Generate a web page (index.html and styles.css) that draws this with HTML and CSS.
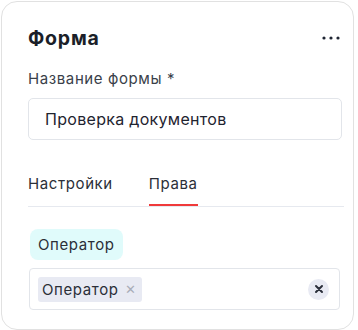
FILE: index.html
```html
<!DOCTYPE html>
<html lang="ru">
  <head>
    <meta charset="UTF-8" />
    <meta name="viewport" content="width=device-width, initial-scale=1.0" />
    <title>Форма</title>
    <link rel="stylesheet" href="styles.css">
  </head>
  <body>
    <div class="card">
      <div class="card-header">
        <h2>Форма</h2>
        <button class="more" aria-label="Ещё">
          <svg width="18" height="4" viewBox="0 0 18 4">
            <circle cx="2" cy="2" r="1.6" fill="#1f2533" />
            <circle cx="9" cy="2" r="1.6" fill="#1f2533" />
            <circle cx="16" cy="2" r="1.6" fill="#1f2533" />
          </svg>
        </button>
      </div>

      <label class="field-label">Название формы *</label>
      <div class="input">Проверка документов</div>

      <div class="tabs">
        <div class="tab">Настройки</div>
        <div class="tab active">Права</div>
      </div>

      <div class="role">Оператор</div>

      <div class="select">
        <div class="chip">
          Оператор
          <span class="chip-x">✕</span>
        </div>
        <button class="clear" aria-label="Очистить">
          <svg width="10" height="10" viewBox="0 0 10 10">
            <path d="M2 2 L8 8 M8 2 L2 8" stroke="#2a2f3a" stroke-width="2" stroke-linecap="round" />
          </svg>
        </button>
      </div>
    </div>
  </body>
</html>
```

FILE: styles.css
```css
body {
  margin: 0;
  padding: 1px 4px 2px 1px;
  font-family: Inter, "Noto Sans", sans-serif;
  color: #2b2f38;
  background: #fff;
  letter-spacing: 0.6px;
}
.card {
  border: 1.5px solid #e1e1e1;
  border-radius: 16px;
  padding: 19px 13px 16px 26px;
  height: 292px;
}
.card-header {
  display: flex;
  align-items: center;
  justify-content: space-between;
  height: 34px;
}
h2 {
  margin: 0;
  font-size: 19.5px;
  font-weight: 700;
  color: #1b1f29;
  letter-spacing: 0.8px;
}
.more {
  border: none;
  background: none;
  padding: 0;
  display: flex;
}
.field-label {
  display: block;
  margin-top: 14px;
  font-size: 15px;
  color: #3a3f4a;
}
.input {
  margin-top: 10px;
  width: 314px;
  height: 42px;
  box-sizing: border-box;
  border: 1px solid #e2e5ea;
  border-radius: 5px;
  padding: 0 16px;
  display: flex;
  align-items: center;
  font-size: 16px;
  letter-spacing: 0.3px;
  color: #1f2430;
}
.tabs {
  display: flex;
  gap: 36px;
  margin-top: 34px;
  width: 316px;
  border-bottom: 1px solid #e6e9ef;
}
.tab {
  font-size: 15px;
  color: #2b2f38;
  padding-bottom: 13px;
}
.tab.active {
  box-shadow: inset 0 -2px 0 #f03a3a;
}
.role {
  display: inline-block;
  margin: 22px 0 0 2px;
  padding: 6px 8px 6px;
  background: #e0fbfb;
  border-radius: 8px;
  font-size: 15px;
}
.select {
  margin: 8px 0 0 1px;
  width: 311px;
  height: 42px;
  box-sizing: border-box;
  border: 1px solid #e2e5ea;
  border-radius: 4px;
  display: flex;
  align-items: center;
  justify-content: space-between;
  padding: 0 10px 0 8px;
}
.chip {
  display: flex;
  align-items: center;
  gap: 6px;
  height: 25px;
  padding: 0 6px 0 4px;
  background: #e8eaf3;
  border-radius: 3px;
  font-size: 15px;
}
.chip-x {
  color: #a9adb8;
  font-size: 13px;
}
.clear {
  width: 21px;
  height: 21px;
  border: none;
  border-radius: 50%;
  background: #e8eaf3;
  padding: 0;
  display: flex;
  align-items: center;
  justify-content: center;
}
```
